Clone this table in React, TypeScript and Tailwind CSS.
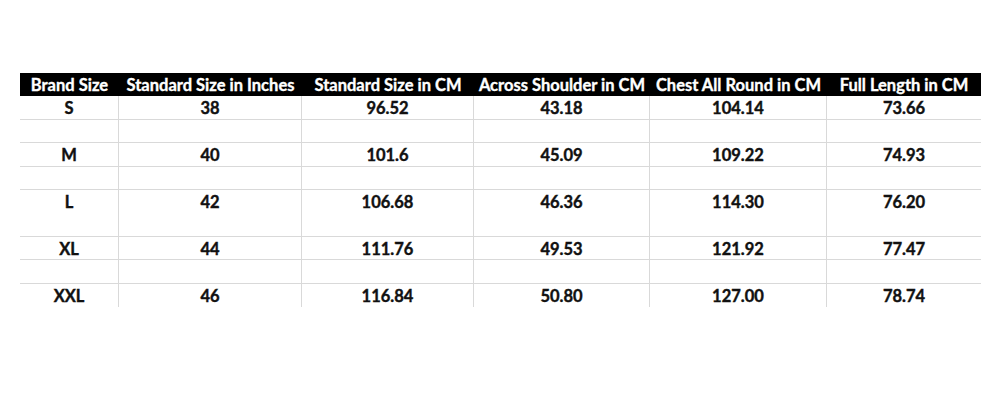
import React from "react";

const headers = [
  "Brand Size",
  "Standard Size in Inches",
  "Standard Size in CM",
  "Across Shoulder in CM",
  "Chest All Round in CM",
  "Full Length in CM",
];

type Row = { h: string; cells: string[] };

const rows: Row[] = [
  { h: "h-[24px]", cells: ["S", "38", "96.52", "43.18", "104.14", "73.66"] },
  { h: "h-[23px]", cells: ["", "", "", "", "", ""] },
  { h: "h-[24px]", cells: ["M", "40", "101.6", "45.09", "109.22", "74.93"] },
  { h: "h-[23px]", cells: ["", "", "", "", "", ""] },
  { h: "h-[47px]", cells: ["L", "42", "106.68", "46.36", "114.30", "76.20"] },
  { h: "h-[23px]", cells: ["XL", "44", "111.76", "49.53", "121.92", "77.47"] },
  { h: "h-[24px]", cells: ["", "", "", "", "", ""] },
  { h: "h-[20px]", cells: ["XXL", "46", "116.84", "50.80", "127.00", "78.74"] },
];

export default function App() {
  return (
    <div
      className="w-[1000px] h-[400px] bg-white pt-[73px] pl-[20px]"
      style={{ fontFamily: "Lato, 'Open Sans', sans-serif" }}
    >
      <div className="w-[961px]">
        <div className="grid grid-cols-[99px_183px_172px_176px_177px_154px] h-[23px] bg-black text-white font-bold text-[16.5px] [-webkit-text-stroke:0.35px_white]">
          {headers.map((t) => (
            <div key={t} className="flex items-center justify-center whitespace-nowrap leading-none pt-[1px]">
              {t}
            </div>
          ))}
        </div>
        {rows.map((r, i) => (
          <div
            key={i}
            className={`grid grid-cols-[99px_183px_172px_176px_177px_154px] ${r.h} ${
              i < rows.length - 1 ? "border-b border-[#d9d9d9]" : ""
            } text-[16.5px] font-bold text-[#111111] [-webkit-text-stroke:0.4px_#111111]`}
          >
            {r.cells.map((c, j) => (
              <div
                key={j}
                className={`${j < 5 ? "border-r border-[#d9d9d9]" : ""} flex justify-center items-start`}
              >
                <div className="h-[23px] flex items-center leading-none pt-[1px]">{c}</div>
              </div>
            ))}
          </div>
        ))}
      </div>
    </div>
  );
}
